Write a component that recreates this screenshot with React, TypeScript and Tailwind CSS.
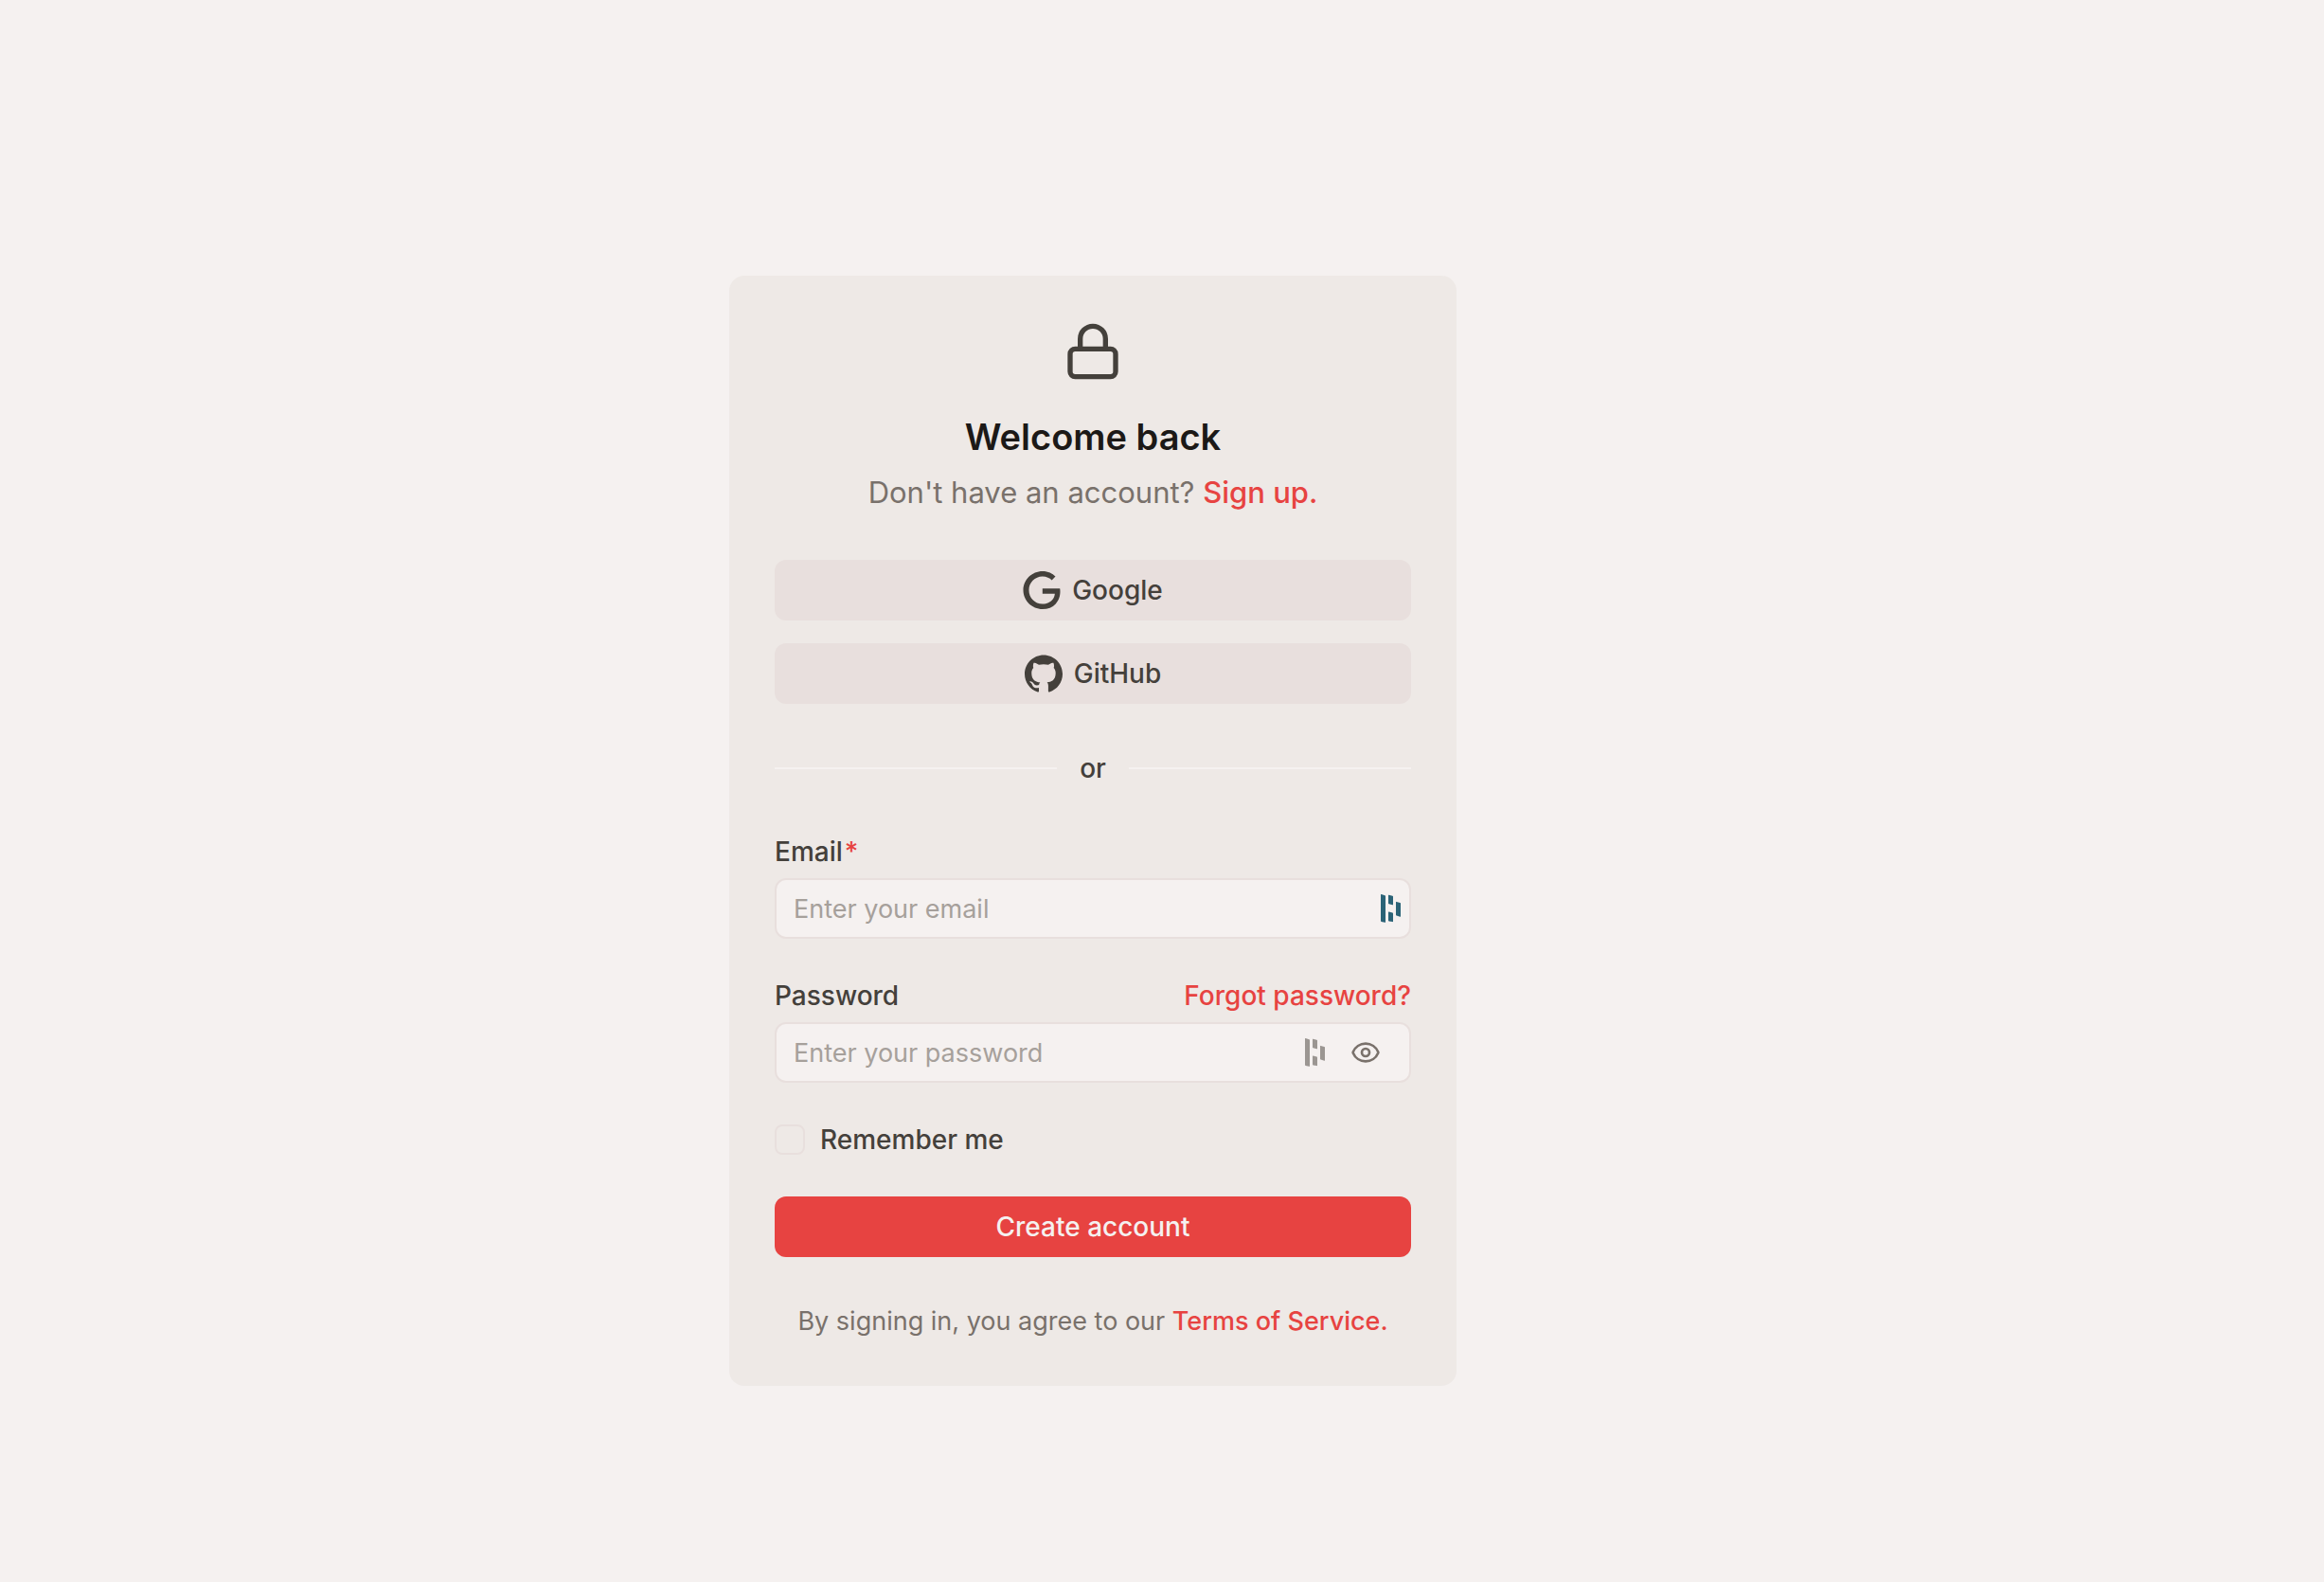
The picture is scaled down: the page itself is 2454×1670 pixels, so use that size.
import { useState } from 'react';
import { Eye, EyeOff, Lock } from 'lucide-react';
import { SiGithub, SiGoogle } from 'react-icons/si';

const providers = [
  { label: 'Google', icon: SiGoogle },
  { label: 'GitHub', icon: SiGithub },
];

// Password manager mark shown inside the fields
const VaultIcon = ({ className }: { className?: string }) => (
  <svg viewBox="0 0 22 30" width={22} height={30} fill="currentColor" className={className} aria-hidden="true">
    <path d="M0 0.6Q0 0 0.6 0.1L4.4 1.2Q5 1.4 5 2V29.4Q5 30 4.4 29.8L0.6 28.9Q0 28.7 0 28Z" />
    <path d="M8 1.1Q8 0.5 8.6 0.7L12.4 1.8Q13 2 13 2.6V10.9Q13 11.5 12.4 11.3L8.6 10.2Q8 10 8 9.4Z" />
    <path d="M8 18.9Q8 18.3 8.6 18.5L12.4 19.6Q13 19.8 13 20.4V28.7Q13 29.3 12.4 29.1L8.6 28.4Q8 28.2 8 27.6Z" />
    <path d="M16 8.3Q16 7.7 16.6 7.9L20.4 9Q21 9.2 21 9.8V23.3Q21 23.9 20.4 23.7L16.6 22.6Q16 22.4 16 21.8Z" />
  </svg>
);

const inputClass =
  'h-16 w-full rounded-xl border-2 border-[#e8dfdd] bg-[#f5f1f0] px-[18px] text-[27px] leading-10 text-[#44403b] placeholder:text-[#a6a09b] focus:outline-[#e74341]';

export default function App() {
  const [showPassword, setShowPassword] = useState(false);

  return (
    <main className="flex min-h-screen items-center justify-center bg-[#f5f1f0] pt-[84px] pr-[146px] font-['Inter',sans-serif] text-[28px] leading-10 text-[#44403b]">
      <div className="w-full max-w-3xl rounded-2xl bg-[#eee9e6] p-12">
        <div className="flex flex-col items-center text-center">
          <Lock size={64} className="mb-[30px]" />
          <h1 className="text-[38px] leading-[56px] font-semibold text-[#1c1917]">Welcome back</h1>
          <p className="mt-2 text-[31px] leading-[46px] text-[#79716b]">
            Don't have an account?{' '}
            <a href="#" className="font-medium text-[#e74341]">Sign up.</a>
          </p>
        </div>

        <div className="mt-12 flex flex-col gap-6">
          {providers.map(({ label, icon: Icon }) => (
            <button
              key={label}
              type="button"
              className="flex h-16 w-full items-center justify-center gap-3 rounded-xl bg-[#e8dfdd] font-medium"
            >
              <Icon size={40} />
              {label}
            </button>
          ))}
        </div>

        <div className="my-12 flex items-center gap-6">
          <div className="h-0.5 flex-1 bg-[#f5f1f0]" />
          <span className="font-medium">or</span>
          <div className="h-0.5 flex-1 bg-[#f5f1f0]" />
        </div>

        <form className="flex flex-col gap-10" onSubmit={(e) => e.preventDefault()}>
          <div>
            <label htmlFor="email" className="block font-medium">
              Email<span className="ml-0.5 text-[#e74341]">*</span>
            </label>
            <div className="relative mt-2 flex">
              <input id="email" type="email" placeholder="Enter your email" className={inputClass} />
              <VaultIcon className="absolute top-[17px] right-[10px] text-[#2b6377]" />
            </div>
          </div>

          <div>
            <div className="flex justify-between">
              <label htmlFor="password" className="font-medium">Password</label>
              <a href="#" className="font-medium text-[#e74341]">Forgot password?</a>
            </div>
            <div className="relative mt-2 flex">
              <input
                id="password"
                type={showPassword ? 'text' : 'password'}
                placeholder="Enter your password"
                className={inputClass}
              />
              <VaultIcon className="absolute top-[17px] right-[90px] text-[#9b9692]" />
              <button
                type="button"
                aria-label={showPassword ? 'Hide password' : 'Show password'}
                onClick={() => setShowPassword(!showPassword)}
                className="absolute top-4 right-8 text-[#79716b]"
              >
                {showPassword ? <EyeOff size={32} /> : <Eye size={32} />}
              </button>
            </div>
          </div>

          <div className="flex items-center gap-4">
            <input
              id="remember"
              type="checkbox"
              className="size-8 appearance-none rounded-lg border-2 border-[#e8dfdd] checked:bg-[#e74341]"
            />
            <label htmlFor="remember" className="font-medium">Remember me</label>
          </div>

          <button type="submit" className="h-16 w-full rounded-xl bg-[#e74341] font-medium text-[#f5f1f0]">
            Create account
          </button>
        </form>

        <p className="mt-12 text-center text-[27px] text-[#79716b]">
          By signing in, you agree to our{' '}
          <a href="#" className="font-medium text-[#e74341]">Terms of Service.</a>
        </p>
      </div>
    </main>
  );
}
